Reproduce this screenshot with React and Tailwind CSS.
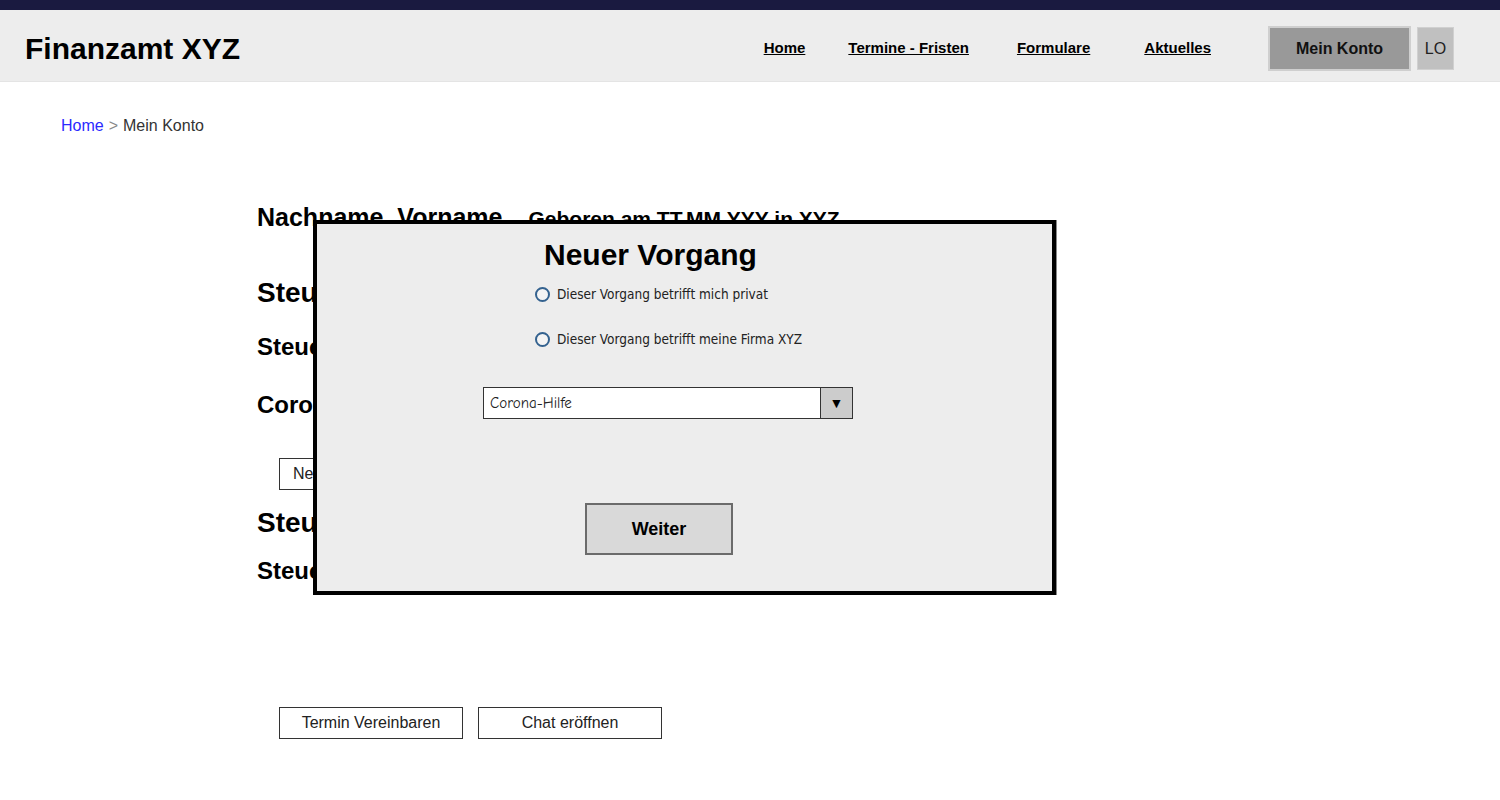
import { useState } from 'react'

const sans = { fontFamily: '"Liberation Sans", Arial, sans-serif' }

function Header() {
  return (
    <header>
      <div className="h-[10px] bg-[#1a1a40]" />
      <div className="flex items-center h-[72px] pt-[6px] bg-[#ededed] border-b border-[#e4e4e4]">
        <h1 className="ml-[25px] text-[30px] font-bold text-black leading-none">Finanzamt XYZ</h1>
        <nav className="ml-auto flex items-center pr-[46px]">
          <a href="#" className="text-[15px] font-bold text-black underline">Home</a>
          <a href="#" className="ml-[43px] text-[15px] font-bold text-black underline">Termine - Fristen</a>
          <a href="#" className="ml-[48px] text-[15px] font-bold text-black underline">Formulare</a>
          <a href="#" className="ml-[54px] text-[15px] font-bold text-black underline">Aktuelles</a>
          <button className="ml-[57px] w-[143px] h-[45px] bg-[#999999] border-2 border-[#cfcfcf] text-[16px] font-bold text-[#111]">
            Mein Konto
          </button>
          <button className="ml-[6px] w-[37px] h-[43px] bg-[#c0c0c0] border border-[#d0d0d0] text-[16px] text-[#222]">
            LO
          </button>
        </nav>
      </div>
    </header>
  )
}

function Radio({ label }) {
  return (
    <div className="flex items-center h-[16px]">
      <span className="w-[15px] h-[15px] rounded-full border-2 border-[#34628f] bg-[#f4f4f4]" />
      <span
        className="ml-[7px] text-[13.5px] leading-[16px] text-[#222]"
        style={{ fontFamily: 'Tahoma, "DejaVu Sans Condensed", "Liberation Sans Narrow", "Liberation Sans", sans-serif' }}
      >
        {label}
      </span>
    </div>
  )
}

function NewProcessModal() {
  const [kind, setKind] = useState('Corona-Hilfe')
  return (
    <div className="absolute left-[313px] top-[220px] w-[743px] h-[375px] bg-[#ededed] border-4 border-black shadow-[1px_0_0_#888] flex flex-col items-start">
      <h2 className="ml-[227px] mt-[13px] text-[30px] leading-[36px] font-bold text-black">Neuer Vorgang</h2>
      <div className="ml-[218px] mt-[13px]">
        <Radio label="Dieser Vorgang betrifft mich privat" />
      </div>
      <div className="ml-[218px] mt-[29px]">
        <Radio label="Dieser Vorgang betrifft meine Firma XYZ" />
      </div>
      <div className="ml-[166px] mt-[40px] flex w-[370px] h-[32px] border border-[#333] bg-white">
        <span
          className="flex-1 flex items-center pl-[6px] text-[15px] text-[#222]"
          style={{ fontFamily: '"Comic Sans MS", "Comic Neue", cursive' }}
        >
          {kind}
        </span>
        <button
          onClick={() => setKind(kind)}
          className="w-[32px] h-full bg-[#cccccc] border-l border-[#333] flex items-center justify-center text-[14px] text-black"
        >
          ▼
        </button>
      </div>
      <button className="ml-[268px] mt-[84px] w-[148px] h-[52px] bg-[#d9d9d9] border-2 border-[#6b6b6b] text-[18px] font-bold text-black">
        Weiter
      </button>
    </div>
  )
}

export default function App() {
  return (
    <div className="relative min-h-[800px] bg-white text-black" style={sans}>
      <Header />

      <div className="pl-[61px] mt-[34px] h-[20px] flex items-center text-[16px]">
        <a href="#" className="text-[#2a2aff]">Home</a>
        <span className="mx-[5px] text-[#888]">&gt;</span>
        <span className="text-[#333]">Mein Konto</span>
      </div>

      <main className="pl-[257px] flex flex-col items-start">
        <div className="mt-[67px] flex items-baseline h-[28px]">
          <span className="text-[25px] leading-[28px] font-bold">Nachname, Vorname</span>
          <span className="ml-[26px] text-[21px] font-bold">Geboren am TT.MM.YYY in XYZ</span>
        </div>

        {/* rows below sit behind the dialog, only their first letters show */}
        <div className="mt-[46px] text-[28px] leading-[32px] font-bold">Steuer-ID</div>
        <div className="mt-[24px] text-[24px] leading-[28px] font-bold">Steuernummer</div>
        <div className="mt-[30px] text-[24px] leading-[28px] font-bold">Corona-Hilfe</div>

        <button className="ml-[22px] mt-[39px] h-[32px] px-[13px] border border-[#333] text-[16px] text-[#222]">
          Neuer Vorgang
        </button>

        <div className="mt-[17px] text-[28px] leading-[32px] font-bold">Steuerbescheide</div>
        <div className="mt-[18px] text-[24px] leading-[28px] font-bold">Steuer 2019</div>

        <div className="ml-[22px] mt-[122px] flex gap-[15px]">
          <button className="w-[184px] h-[32px] border border-[#333] text-[16px] text-[#222]">Termin Vereinbaren</button>
          <button className="w-[184px] h-[32px] border border-[#333] text-[16px] text-[#222]">Chat eröffnen</button>
        </div>
      </main>

      <NewProcessModal />
    </div>
  )
}
